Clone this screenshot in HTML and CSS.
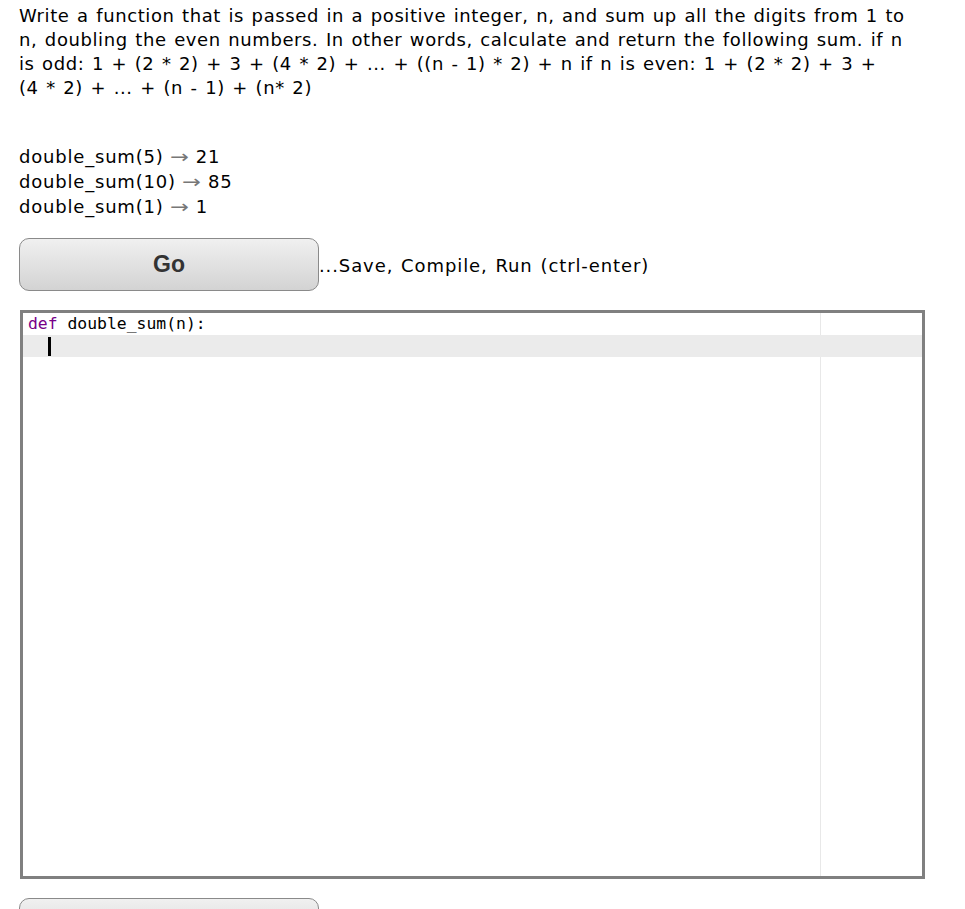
FILE: index.html
```html
<!DOCTYPE html>
<html>
<head>
<meta charset="utf-8">
<link rel="stylesheet" href="styles.css">
</head>
<body>
<div class="page">
  <p class="prompt">Write a function that is passed in a positive integer, n, and sum up all the digits from 1 to<br>n, doubling the even numbers. In other words, calculate and return the following sum. if n<br>is odd: 1 + (2 * 2) + 3 + (4 * 2) + ... + ((n - 1) * 2) + n if n is even: 1 + (2 * 2) + 3 +<br>(4 * 2) + ... + (n - 1) + (n* 2)</p>
  <div class="examples">
    <div class="ex">double_sum(5) <span class="arrow">→</span> 21</div>
    <div class="ex">double_sum(10) <span class="arrow">→</span> 85</div>
    <div class="ex">double_sum(1) <span class="arrow">→</span> 1</div>
  </div>
  <div class="go-row">
    <button class="btn">Go</button>
    <span class="hint">...Save, Compile, Run (ctrl-enter)</span>
  </div>
  <div class="editor">
    <div class="print-margin"></div>
    <div class="line"><span class="kw">def</span> double_sum(n):</div>
    <div class="line active"><span class="indent">  </span><span class="cursor"></span></div>
  </div>
  <div class="bottom-row">
    <button class="btn"></button>
  </div>
</div>
</body>
</html>
```
FILE: styles.css
```css
html, body {
  margin: 0;
  padding: 0;
  background: #fff;
}
body {
  overflow: hidden;
  height: 909px;
}
.page {
  padding: 4px 0 0 19px;
  width: 906px;
  font-family: "DejaVu Sans", Verdana, sans-serif;
  font-size: 18px;
  letter-spacing: 0.6px;
  word-spacing: 1.2px;
  color: #000;
}
.prompt {
  margin: 0;
  white-space: nowrap;
  line-height: 24px;
}
.examples {
  margin-top: 44px;
  letter-spacing: 0.8px;
  word-spacing: 0;
}
.ex {
  height: 25px;
  line-height: 25px;
}
.arrow {
  display: inline-block;
  color: #777;
  letter-spacing: 0;
  transform: scaleX(1.25);
  margin: 0 2px;
}
.go-row {
  display: flex;
  align-items: center;
  margin-top: 19px;
}
.btn {
  box-sizing: border-box;
  width: 300px;
  height: 53px;
  border: 1px solid #8a8a8a;
  border-radius: 10px;
  background: linear-gradient(#f0f0f0, #d3d3d3);
  font-family: "Liberation Sans", Arial, sans-serif;
  font-weight: bold;
  font-size: 23px;
  letter-spacing: 0;
  word-spacing: 0;
  color: #333;
  padding: 0;
  margin: 0;
}
.hint {
  margin-top: 1px;
  letter-spacing: 0.9px;
}
.editor {
  position: relative;
  margin: 19px 0 0 1px;
  width: 905px;
  height: 569px;
  box-sizing: border-box;
  border: 3px solid #808080;
  font-family: "DejaVu Sans Mono", monospace;
  font-size: 16.4px;
  letter-spacing: 0;
  word-spacing: 0;
  overflow: hidden;
}
.print-margin {
  position: absolute;
  top: 0;
  bottom: 0;
  left: 797px;
  width: 1px;
  background: #e8e8e8;
}
.line {
  position: relative;
  height: 22px;
  line-height: 22px;
  padding-left: 5px;
  white-space: pre;
  color: #000;
}
.line.active {
  background: #ebebeb;
}
.kw {
  color: #708;
}
.cursor {
  display: inline-block;
  width: 3px;
  height: 19px;
  background: #000;
  vertical-align: middle;
}
.bottom-row {
  margin-top: 19px;
}
```
